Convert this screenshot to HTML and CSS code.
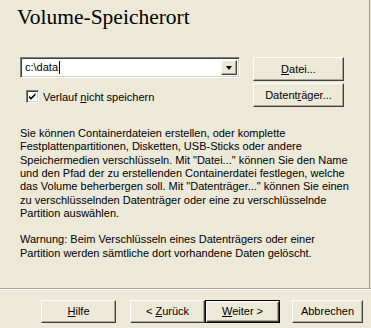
FILE: index.html
```html
<!DOCTYPE html>
<html lang="de">
<head>
<meta charset="utf-8">
<link rel="stylesheet" href="styles.css">
</head>
<body>
<div class="window">
  <div class="main">
    <h1 class="title">Volume-Speicherort</h1>
    <div class="form">
      <div class="left">
        <div class="combo">
          <div class="combo-text"><span>c:\data</span><span class="caret"></span></div>
          <div class="combo-btn"><span class="tri"></span></div>
        </div>
        <label class="check">
          <span class="box"><svg width="9" height="9" viewBox="0 0 9 9"><path d="M1 3.5 L3 5.5 L7.5 1 L7.5 3.2 L3 7.7 L1 5.7 Z" fill="#000"/></svg></span>
          <span class="check-label">Verlauf <u>n</u>icht speichern</span>
        </label>
      </div>
      <div class="right">
        <div class="btn"><span><u>D</u>atei...</span></div>
        <div class="btn"><span>Datent<u>r</u>äger...</span></div>
      </div>
    </div>
    <p class="text">Sie können Containerdateien erstellen, oder komplette Festplattenpartitionen, Disketten, USB-Sticks oder andere Speichermedien verschlüsseln. Mit "Datei..." können Sie den Name und den Pfad der zu erstellenden Containerdatei festlegen, welche das Volume beherbergen soll. Mit "Datenträger..." können Sie einen zu verschlüsselnden Datenträger oder eine zu verschlüsselnde Partition auswählen.</p>
    <p class="text warn">Warnung: Beim Verschlüsseln eines Datenträgers oder einer Partition werden sämtliche dort vorhandene Daten gelöscht.</p>
  </div>
  <div class="sep"></div>
  <div class="footer">
    <div class="btn"><span><u>H</u>ilfe</span></div>
    <div class="pair">
      <div class="btn"><span>&lt; <u>Z</u>urück</span></div>
      <div class="btn default"><span><u>W</u>eiter &gt;</span></div>
    </div>
    <div class="btn cancel"><span>Abbrechen</span></div>
  </div>
</div>
</body>
</html>
```
FILE: styles.css
```css
html, body {
  margin: 0;
  padding: 0;
  background: #ECE9D8;
}
body {
  width: 371px;
  height: 328px;
  overflow: hidden;
  font-family: "Liberation Sans", Arial, sans-serif;
  font-size: 11px;
  color: #000;
}
.window {
  width: 371px;
  height: 328px;
  display: flex;
  flex-direction: column;
}
.main {
  width: 369px;
  height: 288px;
  border-right: 1px solid #A0A0A0;
  box-sizing: content-box;
  padding: 0;
}
.title {
  margin: 0;
  padding: 4px 0 0 17px;
  font-family: "Liberation Serif", "Times New Roman", serif;
  font-weight: normal;
  font-size: 21.5px;
  line-height: 26px;
  height: 26px;
}
.form {
  display: flex;
  margin-top: 27px;
  padding-left: 20px;
}
.left {
  width: 220px;
}
.combo {
  width: 220px;
  height: 21px;
  box-sizing: border-box;
  background: #fff;
  border: 1px solid;
  border-color: #808080 #fff #fff #808080;
  box-shadow: inset 1px 1px 0 #404040, inset -1px -1px 0 #D4D0C8;
  display: flex;
  align-items: center;
  padding: 2px 2px 2px 4px;
}
.combo-text {
  flex: 1;
  line-height: 13px;
  display: flex;
  align-items: center;
}
.caret {
  display: inline-block;
  width: 1px;
  height: 13px;
  background: #000;
  margin-left: 1px;
}
.combo-btn {
  width: 16px;
  height: 15px;
  box-sizing: border-box;
  background: #ECE9D8;
  border: 1px solid;
  border-color: #fff #404040 #404040 #fff;
  box-shadow: inset -1px -1px 0 #ACA899;
  display: flex;
  align-items: center;
  justify-content: center;
}
.tri {
  width: 0;
  height: 0;
  border-left: 3.5px solid transparent;
  border-right: 3.5px solid transparent;
  border-top: 4px solid #000;
}
.check {
  display: flex;
  align-items: center;
  margin-top: 12px;
  padding-left: 6px;
}
.box {
  width: 13px;
  height: 13px;
  box-sizing: border-box;
  background: #fff;
  border: 1px solid;
  border-color: #808080 #fff #fff #808080;
  box-shadow: inset 1px 1px 0 #404040, inset -1px -1px 0 #D4D0C8;
  display: flex;
  align-items: center;
  justify-content: center;
}
.check-label {
  margin-left: 4px;
}
.right {
  margin-left: 13px;
  display: flex;
  flex-direction: column;
  gap: 2px;
}
.btn {
  width: 75px;
  height: 23px;
  box-sizing: border-box;
  background: #ECE9D8;
  border: 1px solid;
  border-color: #fff #404040 #404040 #fff;
  box-shadow: inset -1px -1px 0 #ACA899;
  display: flex;
  align-items: center;
  justify-content: center;
  line-height: 13px;
  white-space: pre;
}
.right .btn {
  width: 91px;
  height: 24px;
}
.text {
  margin: 20px 0 0 20px;
  width: 335px;
  line-height: 13.33px;
}
.warn {
  margin-top: 13px;
}
.sep {
  height: 0;
  border-top: 1px solid #ACA899;
  border-bottom: 1px solid #fff;
}
.footer {
  display: flex;
  align-items: flex-start;
  padding: 10px 0 0 41px;
}
.pair {
  display: flex;
  margin-left: 14px;
}
.btn.cancel {
  margin-left: 12px;
  width: 71px;
}
.btn.default {
  border: 1px solid #000;
  box-shadow: inset 1px 1px 0 #fff, inset -1px -1px 0 #404040, inset -2px -2px 0 #ACA899;
}
```
